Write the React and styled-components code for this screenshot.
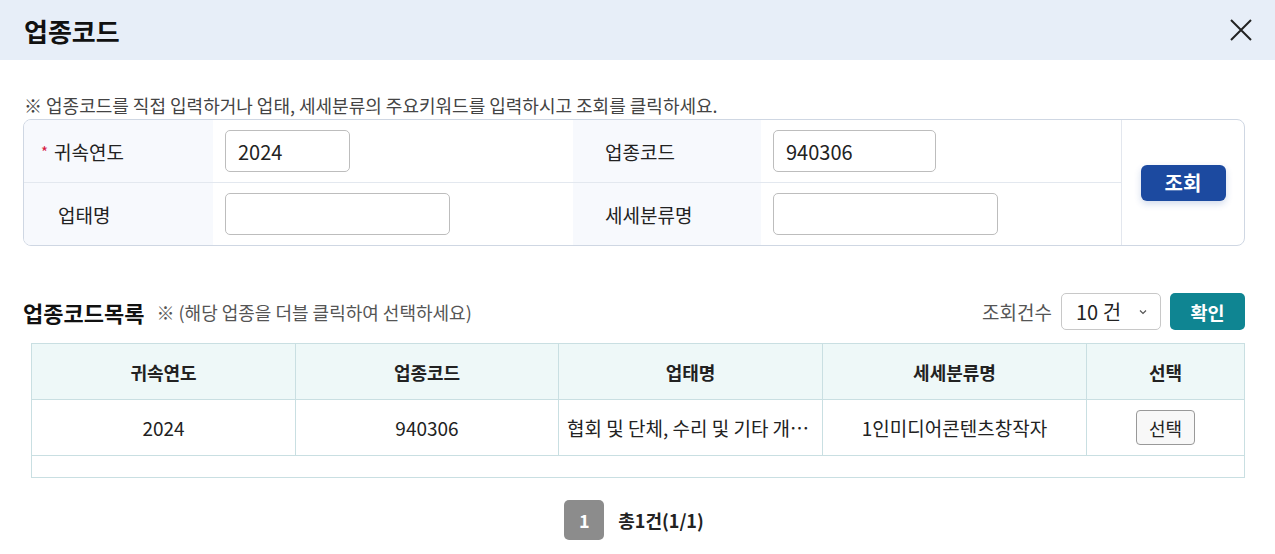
import styled, { createGlobalStyle } from "styled-components";

const GlobalStyle = createGlobalStyle`
  * { box-sizing: border-box; }
  body {
    margin: 0;
    background: #fff;
    font-family: "Noto Sans CJK KR", "Noto Sans", sans-serif;
    color: #222;
  }
`;

const Header = styled.div`
  height: 60px;
  padding: 0 22px 0 24px;
  display: flex;
  align-items: center;
  justify-content: space-between;
  background: #e7eef8;
  h1 {
    margin: 0;
    font-size: 26px;
    font-weight: 700;
    color: #111;
  }
`;

const CloseButton = styled.button`
  width: 24px;
  height: 24px;
  padding: 0;
  border: 0;
  background: none;
  cursor: pointer;
`;

const Content = styled.div`
  padding: 34px 30px 0 23px;
`;

const Notice = styled.p`
  margin: 0 0 2px 1px;
  font-size: 18px;
  line-height: 23px;
  color: #444;
`;

const SearchBox = styled.div`
  display: grid;
  grid-template-columns: 189px 360px 188px 360px 1fr;
  grid-template-rows: 63px 62px;
  border: 1px solid #cfd7e3;
  border-radius: 8px;
  overflow: hidden;
`;

const LabelCell = styled.div`
  display: flex;
  align-items: center;
  padding-left: ${(p) => p.$pad}px;
  background: #f7f9fd;
  font-size: 19px;
  color: #222;
  border-bottom: ${(p) => (p.$top ? "1px solid #e3e8ef" : "0")};
  .req {
    color: #d6173f;
    margin-right: 6px;
    font-size: 15px;
  }
`;

const ValueCell = styled.div`
  display: flex;
  align-items: center;
  padding-left: 12px;
  border-bottom: ${(p) => (p.$top ? "1px solid #e3e8ef" : "0")};
`;

const TextInput = styled.input`
  width: ${(p) => p.$w}px;
  height: 42px;
  padding: 0 12px;
  border: 1px solid #bdbdbd;
  border-radius: 5px;
  font-family: inherit;
  font-size: 20px;
  color: #222;
  outline: none;
`;

const ButtonCell = styled.div`
  grid-column: 5;
  grid-row: 1 / span 2;
  display: flex;
  align-items: center;
  justify-content: center;
  border-left: 1px solid #e3e7ee;
`;

const SearchButton = styled.button`
  width: 85px;
  height: 36px;
  border: 0;
  border-radius: 6px;
  background: #1c4aa0;
  color: #fff;
  font-family: inherit;
  font-size: 20px;
  font-weight: 700;
  box-shadow: 0 3px 7px rgba(28, 74, 160, 0.2);
  cursor: pointer;
`;

const ListHeader = styled.div`
  margin-top: 47px;
  display: flex;
  align-items: center;
  justify-content: space-between;
`;

const ListTitle = styled.div`
  display: flex;
  align-items: center;
  h2 {
    margin: 0;
    font-size: 22px;
    font-weight: 700;
    color: #111;
  }
  span {
    margin-left: 12px;
    font-size: 18px;
    color: #555;
  }
`;

const Controls = styled.div`
  display: flex;
  align-items: center;
  gap: 9px;
  span {
    font-size: 19px;
    color: #555;
  }
`;

const Select = styled.div`
  width: 100px;
  height: 37px;
  padding: 0 12px 0 14px;
  display: flex;
  align-items: center;
  justify-content: space-between;
  border: 1px solid #c8c8c8;
  border-radius: 5px;
  font-size: 20px;
  color: #222;
`;

const ConfirmButton = styled.button`
  width: 75px;
  height: 37px;
  border: 0;
  border-radius: 5px;
  background: #0f8592;
  color: #fff;
  font-family: inherit;
  font-size: 18.5px;
  font-weight: 700;
  cursor: pointer;
`;

const Table = styled.table`
  margin: 13px 0 0 8px;
  width: calc(100% - 8px);
  border-collapse: collapse;
  table-layout: fixed;
  th, td {
    border: 1px solid #c9dfe2;
    text-align: center;
    padding: 0 8px;
    white-space: nowrap;
    overflow: hidden;
    text-overflow: ellipsis;
  }
  th {
    height: 56px;
    background: #eef8f8;
    font-size: 18px;
    font-weight: 700;
    color: #222;
  }
  td {
    height: 56px;
    font-size: 19px;
    color: #222;
  }
  tr.empty td {
    height: 22px;
  }
`;

const PickButton = styled.button`
  width: 59px;
  height: 35px;
  border: 1px solid #999;
  border-radius: 4px;
  background: #f8f8f8;
  font-family: inherit;
  font-size: 18px;
  color: #222;
  cursor: pointer;
`;

const Pager = styled.div`
  margin-top: 22px;
  display: flex;
  align-items: center;
  justify-content: center;
  gap: 14px;
  span {
    font-size: 18px;
    font-weight: 700;
    color: #222;
  }
`;

const PageBox = styled.div`
  width: 40px;
  height: 40px;
  display: flex;
  align-items: center;
  justify-content: center;
  border-radius: 5px;
  background: #8c8c8c;
  color: #fff;
  font-size: 18px;
  font-weight: 700;
`;

const rows = [
  {
    year: "2024",
    code: "940306",
    name: "협회 및 단체, 수리 및 기타 개인 서비스업",
    sub: "1인미디어콘텐츠창작자",
  },
];

export default function App() {
  return (
    <>
      <GlobalStyle />
      <Header>
        <h1>업종코드</h1>
        <CloseButton aria-label="닫기">
          <svg width="24" height="24" viewBox="0 0 24 24">
            <path d="M2 2 L22 22 M22 2 L2 22" stroke="#222" strokeWidth="2" fill="none" />
          </svg>
        </CloseButton>
      </Header>
      <Content>
        <Notice>※ 업종코드를 직접 입력하거나 업태, 세세분류의 주요키워드를 입력하시고 조회를 클릭하세요.</Notice>
        <SearchBox>
          <LabelCell $pad={17} $top>
            <span className="req">*</span>귀속연도
          </LabelCell>
          <ValueCell $top>
            <TextInput $w={125} defaultValue="2024" />
          </ValueCell>
          <LabelCell $pad={32} $top>업종코드</LabelCell>
          <ValueCell $top>
            <TextInput $w={163} defaultValue="940306" />
          </ValueCell>
          <ButtonCell>
            <SearchButton>조회</SearchButton>
          </ButtonCell>
          <LabelCell $pad={34}>업태명</LabelCell>
          <ValueCell>
            <TextInput $w={225} />
          </ValueCell>
          <LabelCell $pad={32}>세세분류명</LabelCell>
          <ValueCell>
            <TextInput $w={225} />
          </ValueCell>
        </SearchBox>

        <ListHeader>
          <ListTitle>
            <h2>업종코드목록</h2>
            <span>※ (해당 업종을 더블 클릭하여 선택하세요)</span>
          </ListTitle>
          <Controls>
            <span>조회건수</span>
            <Select>
              10 건
              <svg width="10" height="10" viewBox="0 0 10 10">
                <path d="M2 3.5 L5 6.5 L8 3.5" stroke="#555" strokeWidth="1.2" fill="none" />
              </svg>
            </Select>
            <ConfirmButton>확인</ConfirmButton>
          </Controls>
        </ListHeader>

        <Table>
          <colgroup>
            <col style={{ width: 264 }} />
            <col style={{ width: 263 }} />
            <col style={{ width: 264 }} />
            <col style={{ width: 264 }} />
            <col />
          </colgroup>
          <thead>
            <tr>
              <th>귀속연도</th>
              <th>업종코드</th>
              <th>업태명</th>
              <th>세세분류명</th>
              <th>선택</th>
            </tr>
          </thead>
          <tbody>
            {rows.map((r) => (
              <tr key={r.code}>
                <td>{r.year}</td>
                <td>{r.code}</td>
                <td>{r.name}</td>
                <td>{r.sub}</td>
                <td>
                  <PickButton>선택</PickButton>
                </td>
              </tr>
            ))}
            <tr className="empty">
              <td colSpan={5}></td>
            </tr>
          </tbody>
        </Table>

        <Pager>
          <PageBox>1</PageBox>
          <span>총1건(1/1)</span>
        </Pager>
      </Content>
    </>
  );
}
